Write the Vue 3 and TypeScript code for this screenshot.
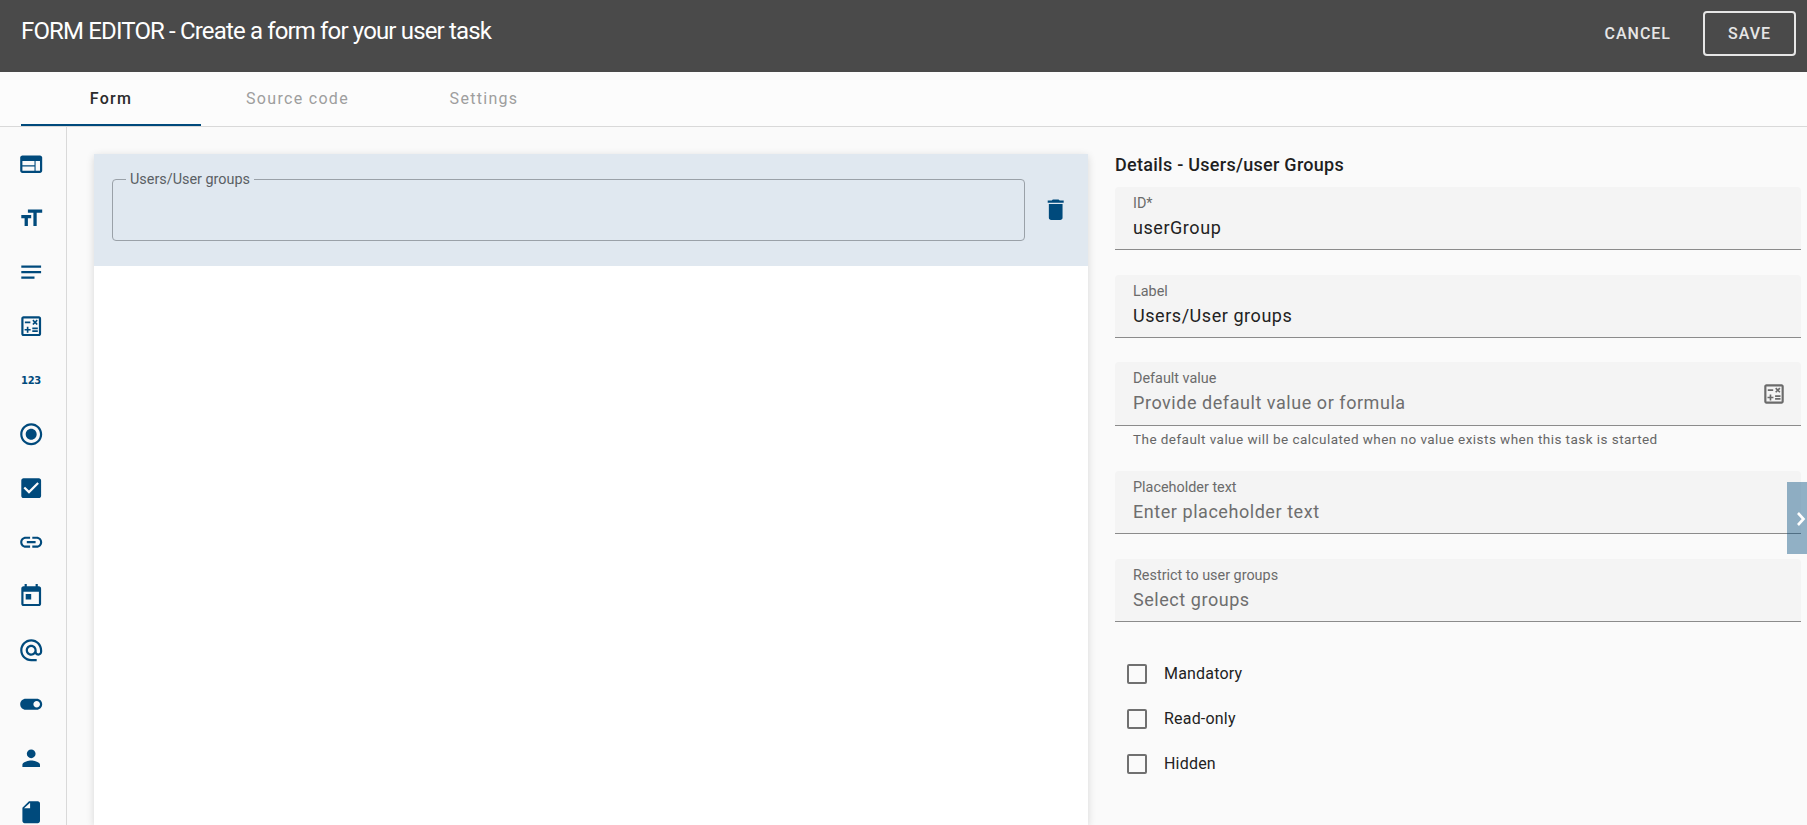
<script setup lang="ts">
interface ToolItem {
  name: string;
  paths?: string[];
}

const tools: ToolItem[] = [
  { name: 'layout', paths: ['M20 4H4c-1.1 0-1.99.9-1.99 2L2 18c0 1.1.9 2 2 2h16c1.1 0 2-.9 2-2V6c0-1.1-.9-2-2-2zm-5 14H4v-4h11v4zm0-5H4V9h11v4zm5 5h-4V9h4v9z'] },
  { name: 'size', paths: ['M9 4v3h5v12h3V7h5V4H9zm-6 8h3v7h3v-7h3V9H3v3z'] },
  { name: 'notes', paths: ['M3 18h12v-2H3v2zM3 6v2h18V6H3zm0 7h18v-2H3v2z'] },
  { name: 'calc', paths: ['M19 3H5c-1.1 0-2 .9-2 2v14c0 1.1.9 2 2 2h14c1.1 0 2-.9 2-2V5c0-1.1-.9-2-2-2zm0 16H5V5h14v14z', 'M6.25 7.72h5v1.5h-5zM13 15.75h5v1.5h-5zM13 13.25h5v1.5h-5zM8 18h1.5v-2h2v-1.5h-2v-2H8v2H6V16h2zM14.09 10.95l1.41-1.41 1.41 1.41 1.06-1.06-1.41-1.42 1.41-1.41L16.91 6 15.5 7.41 14.09 6l-1.06 1.06 1.41 1.41-1.41 1.42z'] },
  { name: 'number' },
  { name: 'radio', paths: ['M12 7c-2.76 0-5 2.24-5 5s2.24 5 5 5 5-2.24 5-5-2.24-5-5-5zm0-5C6.48 2 2 6.48 2 12s4.48 10 10 10 10-4.48 10-10S17.52 2 12 2zm0 18c-4.42 0-8-3.58-8-8s3.58-8 8-8 8 3.58 8 8-3.58 8-8 8z'] },
  { name: 'check', paths: ['M19 3H5c-1.11 0-2 .9-2 2v14c0 1.1.89 2 2 2h14c1.11 0 2-.9 2-2V5c0-1.1-.89-2-2-2zm-9 14l-5-5 1.41-1.41L10 14.17l7.59-7.59L19 8l-9 9z'] },
  { name: 'link', paths: ['M3.9 12c0-1.71 1.39-3.1 3.1-3.1h4V7H7c-2.76 0-5 2.24-5 5s2.24 5 5 5h4v-1.9H7c-1.71 0-3.1-1.39-3.1-3.1zM8 13h8v-2H8v2zm9-6h-4v1.9h4c1.71 0 3.1 1.39 3.1 3.1s-1.39 3.1-3.1 3.1h-4V17h4c2.76 0 5-2.24 5-5s-2.24-5-5-5z'] },
  { name: 'date', paths: ['M19 3h-1V1h-2v2H8V1H6v2H5c-1.11 0-1.99.9-1.99 2L3 19c0 1.1.89 2 2 2h14c1.1 0 2-.9 2-2V5c0-1.1-.9-2-2-2zm0 16H5V8h14v11zM7 10h5v5H7z'] },
  { name: 'email', paths: ['M12 2C6.48 2 2 6.48 2 12s4.48 10 10 10h5v-2h-5c-4.34 0-8-3.66-8-8s3.66-8 8-8 8 3.66 8 8v1.43c0 .79-.71 1.57-1.5 1.57s-1.5-.78-1.5-1.57V12c0-2.76-2.24-5-5-5s-5 2.24-5 5 2.24 5 5 5c1.38 0 2.64-.56 3.54-1.47.65.89 1.77 1.47 2.96 1.47 1.97 0 3.5-1.6 3.5-3.57V12c0-5.52-4.48-10-10-10zm0 13c-1.66 0-3-1.34-3-3s1.34-3 3-3 3 1.34 3 3-1.34 3-3 3z'] },
  { name: 'toggle', paths: ['M17 7H7c-2.76 0-5 2.24-5 5s2.24 5 5 5h10c2.76 0 5-2.24 5-5s-2.24-5-5-5zm0 8c-1.66 0-3-1.34-3-3s1.34-3 3-3 3 1.34 3 3-1.34 3-3 3z'] },
  { name: 'person', paths: ['M12 12c2.21 0 4-1.79 4-4s-1.79-4-4-4-4 1.79-4 4 1.79 4 4 4zm0 2c-2.67 0-8 1.34-8 4v2h16v-2c0-2.66-5.33-4-8-4z'] },
  { name: 'file', paths: ['M18 2h-8L4 8v12c0 1.1.9 2 2 2h12c1.1 0 2-.9 2-2V4c0-1.1-.9-2-2-2zM11 8.5H5.5L11 3.5v5z'] },
];

const checks = ['Mandatory', 'Read-only', 'Hidden'];
</script>

<template>
  <div class="page">
    <header class="topbar">
      <h1 class="topbar-title">FORM EDITOR - Create a form for your user task</h1>
      <div class="topbar-actions">
        <button class="btn-cancel">CANCEL</button>
        <button class="btn-save">SAVE</button>
      </div>
    </header>

    <nav class="tabs">
      <div class="tab active">Form</div>
      <div class="tab">Source code</div>
      <div class="tab">Settings</div>
    </nav>

    <div class="body">
      <aside class="toolbox">
        <div v-for="t in tools" :key="t.name" class="tool">
          <svg v-if="t.paths" viewBox="0 0 24 24" class="tool-icon">
            <path v-for="p in t.paths" :key="p" :d="p" />
          </svg>
          <span v-else class="tool-num">123</span>
        </div>
      </aside>

      <section class="canvas">
        <div class="sheet">
          <div class="selected">
            <fieldset class="outlined">
              <legend>Users/User groups</legend>
            </fieldset>
            <svg viewBox="0 0 24 24" class="trash">
              <path d="M6 19c0 1.1.9 2 2 2h8c1.1 0 2-.9 2-2V7H6v12zM19 4h-3.5l-1-1h-5l-1 1H5v2h14V4z" />
            </svg>
          </div>
        </div>
      </section>

      <section class="details">
        <h2 class="details-title">Details - Users/user Groups</h2>

        <div class="field">
          <label>ID*</label>
          <div class="value">userGroup</div>
        </div>
        <div class="field">
          <label>Label</label>
          <div class="value">Users/User groups</div>
        </div>
        <div class="field with-help">
          <label>Default value</label>
          <div class="value muted">Provide default value or formula</div>
          <svg viewBox="0 0 24 24" class="field-icon">
            <path d="M19 3H5c-1.1 0-2 .9-2 2v14c0 1.1.9 2 2 2h14c1.1 0 2-.9 2-2V5c0-1.1-.9-2-2-2zm0 16H5V5h14v14z" />
            <path d="M6.25 7.72h5v1.5h-5zM13 15.75h5v1.5h-5zM13 13.25h5v1.5h-5zM8 18h1.5v-2h2v-1.5h-2v-2H8v2H6V16h2zM14.09 10.95l1.41-1.41 1.41 1.41 1.06-1.06-1.41-1.42 1.41-1.41L16.91 6 15.5 7.41 14.09 6l-1.06 1.06 1.41 1.41-1.41 1.42z" />
          </svg>
        </div>
        <p class="help">The default value will be calculated when no value exists when this task is started</p>
        <div class="field">
          <label>Placeholder text</label>
          <div class="value muted">Enter placeholder text</div>
        </div>
        <div class="field">
          <label>Restrict to user groups</label>
          <div class="value muted">Select groups</div>
        </div>

        <div class="checks">
          <div v-for="c in checks" :key="c" class="check-row">
            <span class="box"></span>
            <span class="check-label">{{ c }}</span>
          </div>
        </div>
      </section>
    </div>

    <button class="side-toggle">
      <svg viewBox="0 0 12 16" class="side-chevron"><path d="M3 2l5.5 6L3 14" /></svg>
    </button>
  </div>
</template>

<style>
html,
body {
  margin: 0;
  height: 100%;
  overflow: hidden;
}
</style>

<style scoped>
.page {
  position: relative;
  height: 825px;
  overflow: hidden;
  display: flex;
  flex-direction: column;
  background-color: #fafafa;
  font-family: Roboto, 'Liberation Sans', sans-serif;
}

.topbar {
  height: 72px;
  flex: none;
  box-sizing: border-box;
  display: flex;
  align-items: center;
  justify-content: space-between;
  padding: 0 11px 5px 21px;
  background-color: #4a4a4a;
  color: #fff;
}

.topbar-title {
  margin: 0 0 5px;
  font-family: Roboto, sans-serif;
  font-size: 24px;
  font-weight: 400;
  letter-spacing: -0.85px;
}

.topbar-actions {
  display: flex;
  align-items: center;
  gap: 32px;
}

.btn-cancel,
.btn-save {
  font-family: Roboto, sans-serif;
  font-size: 16px;
  font-weight: 500;
  letter-spacing: 1px;
  color: #e6e6e6;
  background: none;
  border: none;
  padding: 0;
}

.btn-save {
  width: 93px;
  height: 45px;
  border: 2px solid #e6e6e6;
  border-radius: 4px;
}

.tabs {
  height: 54px;
  flex: none;
  display: flex;
  gap: 6.5px;
  padding-left: 21px;
  background-color: #fcfcfc;
  border-bottom: 1px solid #d9d9d9;
}

.tab {
  width: 180px;
  height: 54px;
  box-sizing: border-box;
  display: flex;
  align-items: center;
  justify-content: center;
  font-size: 16px;
  letter-spacing: 1.3px;
  color: #9e9e9e;
  padding-bottom: 2px;
}

.tab.active {
  font-weight: 500;
  color: #2b2b2b;
  border-bottom: 2px solid #004a7c;
  padding-bottom: 0;
}

.body {
  flex: 1;
  display: flex;
  min-height: 0;
}

.toolbox {
  width: 67px;
  flex: none;
  box-sizing: border-box;
  padding: 10px 4px 0 0;
  border-right: 1px solid #d9d9d9;
}

.tool {
  height: 54px;
  display: flex;
  align-items: center;
  justify-content: center;
}

.tool-icon {
  width: 26.4px;
  height: 26.4px;
  flex: none;
  fill: #004a7c;
}

.tool-num {
  font-family: 'DejaVu Sans', sans-serif;
  font-size: 10px;
  font-weight: 700;
  letter-spacing: -0.3px;
  color: #004a7c;
}

.canvas {
  width: 1021px;
  flex: none;
  box-sizing: border-box;
  padding: 27px 0 0 27px;
}

.sheet {
  height: 100%;
  background-color: #fff;
  box-shadow: 0 2px 8px rgba(0, 0, 0, 0.14);
}

.selected {
  height: 112px;
  box-sizing: border-box;
  display: flex;
  padding: 18px 0 0 18px;
  background-color: #e0e8f0;
}

.outlined {
  width: 913px;
  height: 70.5px;
  flex: none;
  box-sizing: border-box;
  margin: -1.5px 0 0;
  padding: 0 0 0 13px;
  border: 1px solid #9aa1a8;
  border-radius: 4px;
  min-width: 0;
}

.outlined legend {
  padding: 0 4px;
  font-size: 14.4px;
  line-height: 17px;
  color: #5a5f64;
}

.trash {
  width: 27.4px;
  height: 27.4px;
  flex: none;
  margin: 24px 0 0 17px;
  fill: #004a7c;
}

.details {
  width: 686px;
  margin-left: 27px;
  flex: none;
}

.details-title {
  margin: 0;
  height: 60px;
  padding-top: 26px;
  box-sizing: border-box;
  font-size: 18px;
  font-weight: 500;
  line-height: 24px;
  letter-spacing: 0.27px;
  color: #1f1f1f;
}

.field {
  position: relative;
  height: 63px;
  box-sizing: border-box;
  margin-bottom: 24.5px;
  padding: 8px 18px 0;
  background-color: #f4f4f4;
  border-bottom: 1px solid #8b8b8b;
  border-radius: 4px 4px 0 0;
}

.field.with-help {
  height: 64px;
  margin-bottom: 0;
}

.field label {
  display: block;
  font-size: 14.4px;
  line-height: 17px;
  color: #6b6b6b;
}

.value {
  margin-top: 4px;
  font-size: 18px;
  line-height: 24px;
  letter-spacing: 0.55px;
  color: #222;
}

.value.muted {
  color: #6e6e6e;
}

.field-icon {
  position: absolute;
  right: 14px;
  top: 19px;
  width: 26px;
  height: 26px;
  fill: #6b6b6b;
}

.help {
  margin: 0;
  height: 45px;
  padding: 4px 18px 0;
  box-sizing: border-box;
  font-size: 13.5px;
  line-height: 18px;
  letter-spacing: 0.45px;
  color: #666;
}

.checks {
  padding: 5px 0 0 12px;
}

.check-row {
  height: 45px;
  display: flex;
  align-items: center;
  gap: 17px;
}

.box {
  width: 20px;
  height: 20px;
  box-sizing: border-box;
  border: 2px solid #707070;
  border-radius: 2px;
}

.check-label {
  font-size: 16px;
  letter-spacing: 0.2px;
  color: #222;
}

.side-toggle {
  position: absolute;
  right: 0;
  top: 482px;
  width: 20px;
  height: 72px;
  padding: 0 0 0 8px;
  border: none;
  background-color: rgba(0, 74, 124, 0.42);
  display: flex;
  align-items: center;
}

.side-chevron {
  width: 12px;
  height: 16px;
  margin-top: 1px;
  flex: none;
  fill: none;
  stroke: #fff;
  stroke-width: 2.6;
}
</style>
